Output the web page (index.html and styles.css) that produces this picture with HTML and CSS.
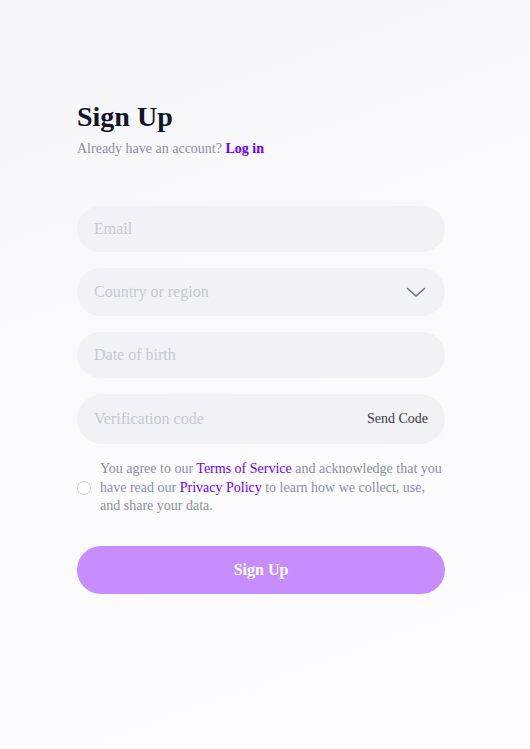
FILE: index.html
```html
<!DOCTYPE html>
<html lang="en">
<head>
<meta charset="utf-8">
<title>Sign Up</title>
<link rel="stylesheet" href="styles.css">
</head>
<body>
<main class="page">
  <form class="form">
    <header class="head">
      <h1 class="title">Sign Up</h1>
      <p class="sub">Already have an account? <a class="login" href="#">Log in</a></p>
    </header>
    <div class="fields">
      <div class="field f-email"><span class="ph">Email</span></div>
      <div class="field f-country"><span class="ph">Country or region</span>
        <svg class="chev" width="20" height="11" viewBox="0 0 20 11"><path d="M1.5 1.5 L10 9 L18.5 1.5" fill="none" stroke="#6b6f7d" stroke-width="1.6" stroke-linecap="round" stroke-linejoin="round"/></svg>
      </div>
      <div class="field f-date"><span class="ph">Date of birth</span></div>
      <div class="field f-code"><span class="ph">Verification code</span><span class="send">Send Code</span></div>
    </div>
    <div class="agree">
      <span class="radio"></span>
      <p class="terms">You agree to our <a href="#" class="tlink">Terms of Service</a> and acknowledge that you have read our <a href="#" class="tlink">Privacy Policy</a> to learn how we collect, use, and share your data.</p>
    </div>
    <button type="button" class="submit">Sign Up</button>
  </form>
</main>
</body>
</html>
```
FILE: styles.css
```css
html, body {
  margin: 0;
  height: 100%;
}
body {
  font-family: "Liberation Serif", "Times New Roman", serif;
  background: linear-gradient(160deg, #f6f6f9 0%, #fafafd 45%, #fdfdff 100%);
}
.page {
  padding: 99px 0 0 77px;
}
.form {
  width: 368px;
  display: flex;
  flex-direction: column;
}
.title {
  margin: 0;
  font-size: 28px;
  line-height: 36px;
  font-weight: 700;
  color: #0f1525;
}
.sub {
  margin: 5px 0 0;
  font-size: 14px;
  line-height: 18px;
  color: #8c8fa0;
}
.login {
  color: #6a00ff;
  font-weight: 700;
  text-decoration: none;
}
.fields {
  margin-top: 48px;
  display: flex;
  flex-direction: column;
  gap: 16px;
}
.field {
  display: flex;
  align-items: center;
  justify-content: space-between;
  height: 46px;
  padding: 0 17px;
  border-radius: 24px;
  background: #f2f2f4;
}
.f-country { height: 48px; padding-right: 19px; }
.f-code { height: 50px; padding-right: 17px; border-radius: 25px; }
.ph {
  font-size: 16px;
  color: #c6c8d3;
}
.send {
  font-size: 14px;
  color: #3a3d48;
}
.chev { display: block; }
.agree {
  margin-top: 16px;
  display: flex;
  align-items: center;
  gap: 9px;
}
.radio {
  flex: none;
  width: 12px;
  height: 12px;
  border: 1px solid #c9cad2;
  border-radius: 50%;
  background: #fff;
}
.terms {
  margin: 0;
  font-size: 14px;
  line-height: 18.5px;
  color: #8c8fa0;
}
.tlink {
  color: #6a00ff;
  text-decoration: none;
}
.submit {
  margin-top: 30px;
  height: 48px;
  border: 0;
  border-radius: 24px;
  background: #c78cfd;
  color: #fff;
  font-family: inherit;
  font-size: 16px;
  font-weight: 700;
  cursor: pointer;
}
```
